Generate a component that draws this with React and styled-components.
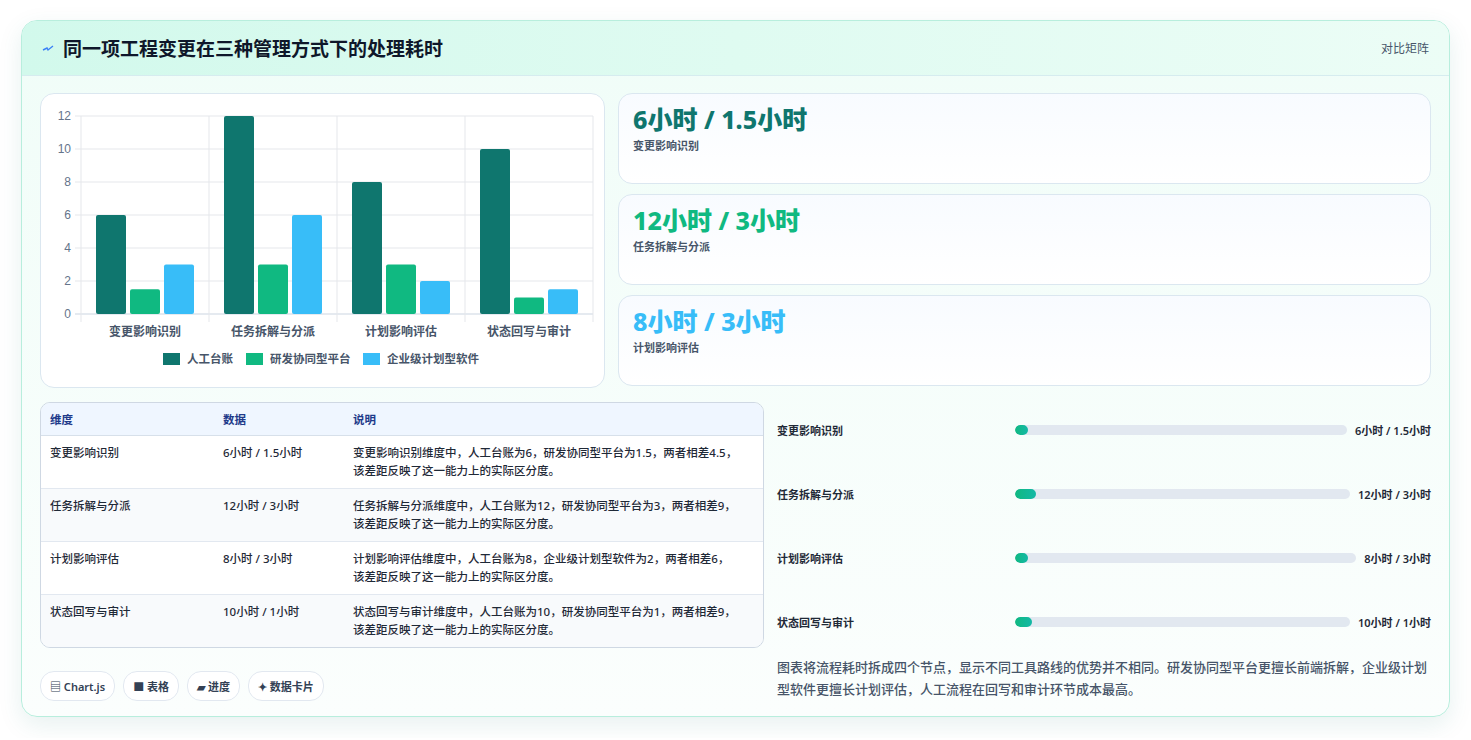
import React from "react";
import styled, { createGlobalStyle } from "styled-components";

const Global = createGlobalStyle`
  html,body{margin:0;background:#fff;}
  body{font-family:"Noto Sans","Noto Sans CJK SC",sans-serif;color:#1f2937;}
`;
const Page = styled.div`padding:20px 21px 21px 21px;`;
const Card = styled.div`
  height:697px;box-sizing:border-box;border:1px solid #b8eedd;border-radius:16px;overflow:hidden;
  background:linear-gradient(180deg,#f0fdf8,#fbfefd);
  box-shadow:0 8px 24px rgba(15,118,110,.10);display:flex;flex-direction:column;
`;
const Header = styled.div`
  height:54px;flex:none;display:flex;align-items:center;justify-content:space-between;padding:0 20px;
  background:linear-gradient(90deg,#d2f9ec,#ecfdf6);border-bottom:1px solid #d6ecef;
`;
const Title = styled.h1`margin:0;font-size:19px;font-weight:700;color:#0f172a;display:flex;align-items:center;gap:9px;`;
const Small = styled.span`font-size:12px;color:#475569;`;
const Body = styled.div`padding:17px 18px 0 18px;display:flex;flex-direction:column;gap:14px;`;
const TopRow = styled.div`display:grid;grid-template-columns:565px 1fr;gap:13px;`;
const Panel = styled.div`background:#fff;border:1px solid #dbe7f0;border-radius:14px;`;
const ChartPanel = styled(Panel)`height:293px;`;
const Stats = styled.div`display:flex;flex-direction:column;gap:10px;`;
const Stat = styled(Panel)`height:91px;box-sizing:border-box;padding:7px 14px;background:linear-gradient(180deg,#f8fbff,#fff);`;
const StatVal = styled.div`font-size:25px;font-weight:800;color:${p=>p.c};line-height:36px;`;
const StatLbl = styled.div`font-size:11px;color:#475569;font-weight:600;`;
const BotRow = styled.div`display:grid;grid-template-columns:724px 1fr;gap:13px;`;
const Table = styled.table`width:100%;border-collapse:separate;border-spacing:0;border:1px solid #cfd8e3;border-radius:10px;overflow:hidden;font-size:11.5px;`;
const Th = styled.th`text-align:left;font-weight:600;color:#1e3a8a;background:#eff6ff;height:32px;padding:0 9px;border-bottom:1px solid #d7e0ea;width:${p=>p.w||"auto"};`;
const Td = styled.td`padding:8px 9px 8px;vertical-align:top;line-height:18px;font-weight:500;color:#1f2937;height:36px;border-top:${p=>p.first?"none":"1px solid #e2e8f0"};background:${p=>p.alt?"#f8fafc":"#fff"};`;
const Chips = styled.div`display:flex;gap:8px;margin-top:23px;`;
const Chip = styled.span`border:1px solid #e2e8f0;border-radius:14px;padding:6px 9px;font-size:11px;font-weight:600;color:#334155;background:#fff;`;
const Right = styled.div`display:flex;flex-direction:column;margin-top:-4px;`;
const PRow = styled.div`height:64px;display:flex;align-items:center;gap:8px;font-size:11px;font-weight:600;`;
const PLabel = styled.div`width:230px;flex:none;`;
const Track = styled.div`flex:1;height:10px;border-radius:5px;background:#e2e8f0;overflow:hidden;`;
const Fill = styled.div`height:100%;border-radius:5px;background:linear-gradient(90deg,#10b981,#14b8a6);`;
const Note = styled.p`margin:0;font-size:13px;line-height:22px;color:#475569;font-weight:500;padding-top:2px;`;

const cats=["变更影响识别","任务拆解与分派","计划影响评估","状态回写与审计"];
const data=[[6,1.5,3],[12,3,6],[8,3,2],[10,1,1.5]];
const cols=["#0f766e","#10b981","#38bdf8"];
const legend=[["人工台账",122],["研发协同型平台",205],["企业级计划型软件",322]];
function Chart(){
  const x0=40,y0=220,sc=16.5,gw=128;
  return <svg width="565" height="293" style={{display:"block"}}>
    {[0,2,4,6,8,10,12].map(v=><g key={v}>
      <line x1={x0-6} x2={552} y1={y0-v*sc} y2={y0-v*sc} stroke={v===0?"#cbd5e1":"#e5e7eb"}/>
      <text x={x0-10} y={y0-v*sc+4} fontSize="12" fill="#64748b" textAnchor="end" fontFamily="Liberation Sans">{v}</text></g>)}
    {[0,1,2,3,4].map(i=><line key={i} x1={x0+i*gw} x2={x0+i*gw} y1={y0-12*sc} y2={y0+8} stroke="#e5e7eb"/>)}
    {data.map((d,i)=><g key={i}>{d.map((v,j)=><rect key={j} x={x0+i*gw+15+j*34} y={y0-v*sc} width="30" height={v*sc} rx="2" fill={cols[j]}/>)}
      <text x={x0+i*gw+64} y={y0+22} fontSize="12" fill="#475569" textAnchor="middle" fontWeight="600">{cats[i]}</text></g>)}
    {legend.map(([t,x],j)=><g key={j}>
      <rect x={x} y={259} width="17" height="12" fill={cols[j]}/>
      <text x={x+24} y={269} fontSize="11.5" fill="#475569" fontWeight="600">{t}</text></g>)}
  </svg>;
}

const rows=[["变更影响识别","6小时 / 1.5小时","变更影响识别维度中，人工台账为6，研发协同型平台为1.5，两者相差4.5，",3.8],
["任务拆解与分派","12小时 / 3小时","任务拆解与分派维度中，人工台账为12，研发协同型平台为3，两者相差9，",6.2],
["计划影响评估","8小时 / 3小时","计划影响评估维度中，人工台账为8，企业级计划型软件为2，两者相差6，",3.8],
["状态回写与审计","10小时 / 1小时","状态回写与审计维度中，人工台账为10，研发协同型平台为1，两者相差9，",5]];

export default function App(){
  return <Page><Global/><Card>
    <Header><Title><svg width="12" height="10" viewBox="0 0 12 10"><path d="M1 7 L5 5 L6 7 L11 3" stroke="#3b82f6" strokeWidth="1.4" fill="none"/></svg>同一项工程变更在三种管理方式下的处理耗时</Title><Small>对比矩阵</Small></Header>
    <Body>
      <TopRow>
        <ChartPanel><Chart/></ChartPanel>
        <Stats>
          <Stat><StatVal c="#0f766e">6小时 / 1.5小时</StatVal><StatLbl>变更影响识别</StatLbl></Stat>
          <Stat><StatVal c="#10b981">12小时 / 3小时</StatVal><StatLbl>任务拆解与分派</StatLbl></Stat>
          <Stat><StatVal c="#38bdf8">8小时 / 3小时</StatVal><StatLbl>计划影响评估</StatLbl></Stat>
        </Stats>
      </TopRow>
      <BotRow>
        <div>
          <Table><thead><tr><Th w="155px">维度</Th><Th w="112px">数据</Th><Th>说明</Th></tr></thead>
          <tbody>{rows.map((r,i)=><tr key={i}>
            <Td first={i===0} alt={i%2===1}>{r[0]}</Td><Td first={i===0} alt={i%2===1}>{r[1]}</Td>
            <Td first={i===0} alt={i%2===1}>{r[2]}<br/>该差距反映了这一能力上的实际区分度。</Td></tr>)}</tbody></Table>
          <Chips><Chip>▤ Chart.js</Chip><Chip>■ 表格</Chip><Chip>▰ 进度</Chip><Chip>✦ 数据卡片</Chip></Chips>
        </div>
        <Right>
          {rows.map((r,i)=><PRow key={i}><PLabel>{r[0]}</PLabel><Track><Fill style={{width:r[3]+"%"}}/></Track><span>{r[1]}</span></PRow>)}
          <Note>图表将流程耗时拆成四个节点，显示不同工具路线的优势并不相同。研发协同型平台更擅长前端拆解，企业级计划型软件更擅长计划评估，人工流程在回写和审计环节成本最高。</Note>
        </Right>
      </BotRow>
    </Body>
  </Card></Page>;
}
